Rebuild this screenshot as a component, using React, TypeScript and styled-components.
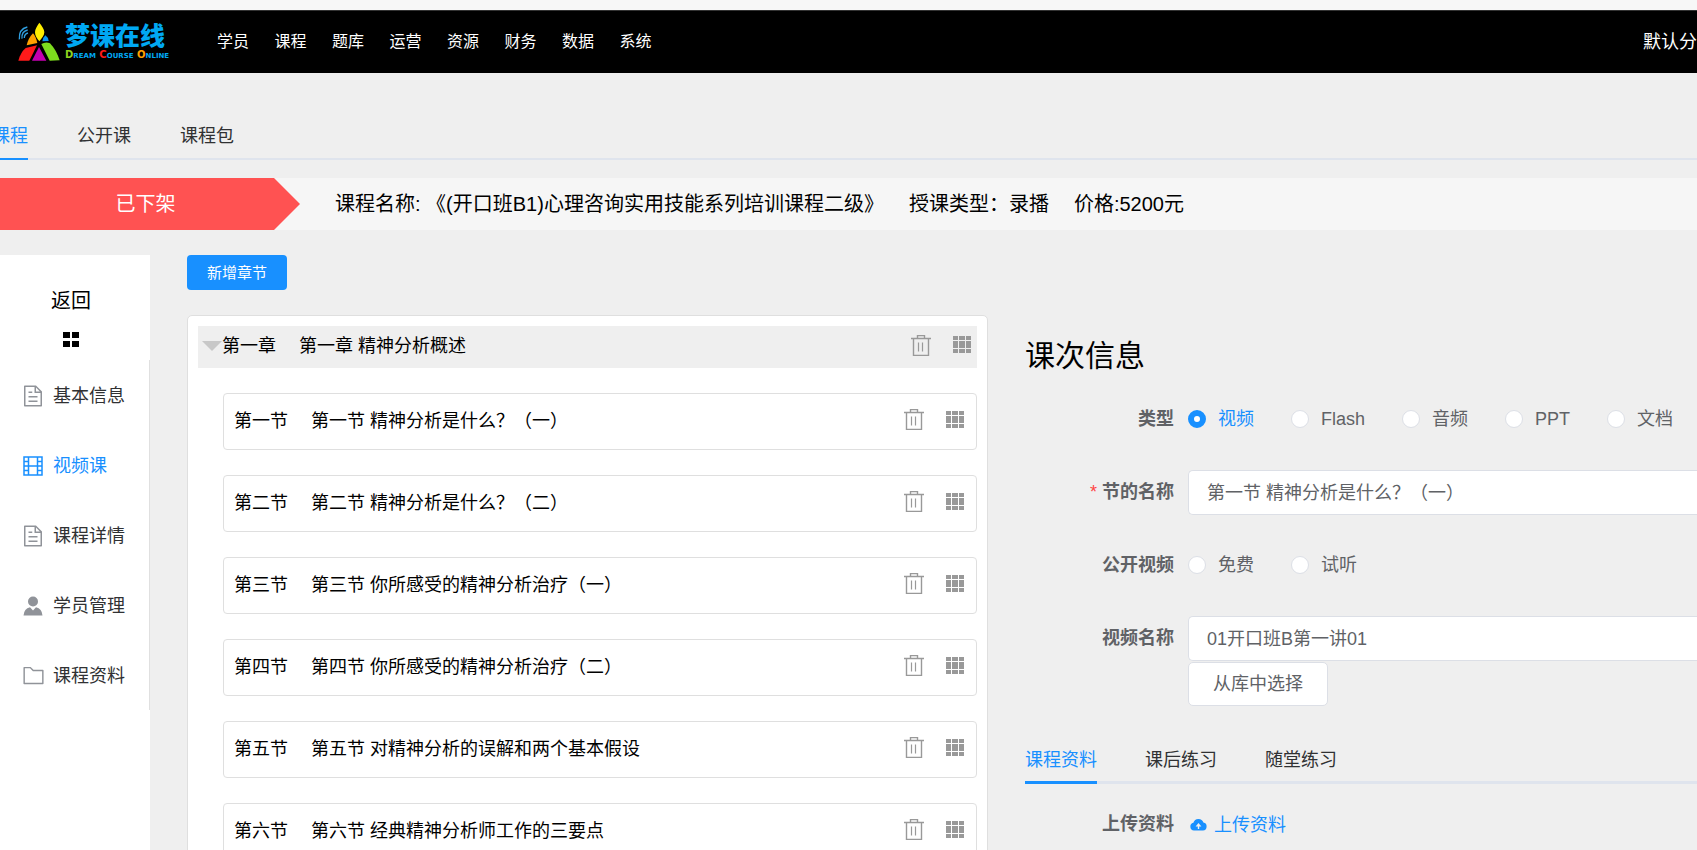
import React, { useState } from "react";
import styled, { createGlobalStyle } from "styled-components";

const BLUE = "#1890ff";
const FONT = '"Liberation Sans", "Noto Sans CJK SC", sans-serif';

const GlobalStyle = createGlobalStyle`
  *, *::before, *::after { box-sizing: border-box; }
  body {
    margin: 0;
    background: #efefef;
    color: #000;
    font-family: ${FONT};
    font-size: 18px;
    line-height: 24px;
  }
  button, input { font: inherit; color: inherit; }
  a { color: inherit; text-decoration: none; }
  svg { display: block; flex: none; }
`;

const Page = styled.div`
  display: flex;
  flex-direction: column;
  height: 100vh;
  overflow: hidden;
`;

const TopStrip = styled.div`
  flex: none;
  height: 10px;
  background: #f7f7f7;
`;

const Header = styled.header`
  flex: none;
  display: flex;
  align-items: center;
  height: 63px;
  padding-left: 17px;
  background: #000;
  border-top: 1px solid #333;
  color: #fff;
`;

const Brand = styled.a`
  display: flex;
  align-items: center;
  gap: 4px;
  width: 192px;
`;

const BrandName = styled.span`
  display: block;
  color: #00a8f3;
  font-size: 25px;
  line-height: 25px;
  font-weight: 900;
`;

const BrandSub = styled.span`
  display: block;
  color: #00a8f3;
  font-family: "DejaVu Sans", sans-serif;
  font-size: 10px;
  line-height: 11px;
  font-weight: 700;
  font-variant: small-caps;
  white-space: nowrap;
`;

const Initial = styled.span<{ $color: string }>`
  color: ${(p) => p.$color};
`;

const MainNav = styled.nav`
  display: grid;
  grid-template-columns: repeat(8, 1fr);
  width: 460px;
  margin-left: 8px;
  font-size: 16px;
`;

const Branch = styled.span`
  margin-left: auto;
  white-space: nowrap;
`;

const Tabs = styled.nav`
  flex: none;
  display: flex;
  gap: 49px;
  height: 50px;
  margin: 37px 0 0;
  border-bottom: 2px solid #dfe4ed;
  color: #303133;
`;

const CourseTabs = styled(Tabs)`
  & > :first-child { margin-left: -8px; }
`;

const Tab = styled.a<{ $active?: boolean; $bar?: number }>`
  flex: none;
  height: 50px;
  padding-top: 14px;
  white-space: nowrap;
  color: ${(p) => (p.$active ? BLUE : "inherit")};
  border-bottom: ${(p) => p.$bar ?? 2}px solid ${(p) => (p.$active ? BLUE : "transparent")};
`;

const StatusBar = styled.section`
  flex: none;
  display: flex;
  align-items: center;
  gap: 25px;
  height: 52px;
  margin-top: 18px;
  background: #f6f6f6;
  font-size: 20px;
  white-space: nowrap;
`;

const StatusFlag = styled.strong`
  display: flex;
  align-items: center;
  justify-content: center;
  width: 300px;
  height: 100%;
  margin-right: 10px;
  padding-right: 9px;
  background: #ff5252;
  clip-path: polygon(0 0, 274px 0, 100% 50%, 274px 100%, 0 100%);
  color: #fff;
  font-weight: inherit;
`;

const Body = styled.div`
  flex: 1;
  min-height: 0;
  display: flex;
  margin-top: 25px;
`;

const Sidebar = styled.aside`
  flex: none;
  width: 150px;
  background: #fff;
`;

const BackLink = styled.a`
  display: flex;
  flex-direction: column;
  align-items: center;
  gap: 16px;
  height: 105px;
  padding: 31px 8px 0 0;
  font-size: 20px;
  line-height: 30px;
`;

const Menu = styled.ul`
  margin: 0;
  padding: 0;
  list-style: none;
  border-right: 1px solid #e0e0e0;
`;

const MenuLink = styled.a<{ $active?: boolean }>`
  display: grid;
  grid-template-columns: 24px auto;
  justify-content: start;
  justify-items: center;
  align-items: center;
  gap: 8px;
  height: 70px;
  padding: 1px 0 0 21px;
  color: ${(p) => (p.$active ? BLUE : "#303133")};
  white-space: nowrap;
  svg { color: ${(p) => (p.$active ? BLUE : "#909399")}; }
`;

const Workspace = styled.main`
  flex: 1;
  min-width: 0;
  display: grid;
  grid-template-columns: minmax(0, 801px) minmax(300px, 1fr);
  column-gap: 37px;
  margin-left: 37px;
`;

const PrimaryButton = styled.button`
  width: 100px;
  height: 35px;
  padding: 0;
  border: 0;
  border-radius: 4px;
  background: ${BLUE};
  color: #fff;
  font-size: 15px;
  cursor: pointer;
`;

const ChapterCard = styled.section`
  margin-top: 25px;
  padding: 10px;
  background: #fff;
  border: 1px solid #dfdfdf;
  border-radius: 5px;
`;

const ChapterHead = styled.header`
  display: flex;
  align-items: center;
  height: 42px;
  padding: 0 6px 2px 4px;
  background: #efefef;
`;

const Caret = styled.svg`
  color: #c8c8c8;
`;

const SectionList = styled.ol`
  display: flex;
  flex-direction: column;
  gap: 25px;
  margin: 25px 0 0 25px;
  padding: 0;
  list-style: none;
`;

const SectionRow = styled.li`
  display: flex;
  align-items: center;
  height: 57px;
  padding: 0 12px 2px 10px;
  border: 1px solid #dfdfdf;
  border-radius: 4px;
`;

const Ordinal = styled.span`
  flex: none;
  width: 77px;
`;

const Title = styled.span`
  flex: 1;
  min-width: 0;
  overflow: hidden;
  white-space: nowrap;
`;

const Actions = styled.span`
  display: flex;
  align-items: center;
  gap: 22px;
  padding-bottom: 2px;
  color: #999;
`;

const IconButton = styled.button`
  padding: 0;
  border: 0;
  background: none;
  color: inherit;
  cursor: pointer;
`;

const Detail = styled.section`
  padding-top: 82px;
`;

const DetailTitle = styled.h1`
  margin: 0 0 22px;
  font-size: 30px;
  line-height: 38px;
  font-weight: inherit;
`;

const Field = styled.div`
  display: grid;
  grid-template-columns: 149px minmax(0, 1fr);
  column-gap: 14px;
  margin-bottom: 28px;
  color: #606266;
`;

const FieldLabel = styled.label<{ $required?: boolean }>`
  line-height: 45px;
  text-align: right;
  font-weight: 700;
  &::before {
    content: ${(p) => (p.$required ? '"*"' : "none")};
    margin-right: 5px;
    color: #ff4444;
    font-weight: 400;
  }
`;

const TextInput = styled.input`
  display: block;
  width: 100%;
  height: 45px;
  padding: 0 0 3px 18px;
  background: #fff;
  border: 1px solid #dcdfe6;
  border-right: 0;
  border-radius: 5px 0 0 5px;
  outline: none;
`;

const PlainButton = styled.button`
  width: 140px;
  height: 44px;
  margin-top: 1px;
  padding: 0;
  background: #fff;
  border: 1px solid #dcdfe6;
  border-radius: 5px;
  cursor: pointer;
`;

const RadioGroup = styled.div`
  display: flex;
  gap: 37px;
  height: 44px;
`;

const RadioLabel = styled.label<{ $checked: boolean }>`
  display: flex;
  align-items: center;
  gap: 12px;
  white-space: nowrap;
  color: ${(p) => (p.$checked ? BLUE : "inherit")};
`;

const Radio = styled.input`
  appearance: none;
  flex: none;
  width: 18px;
  height: 18px;
  margin: 0;
  background: #fff;
  border: 1px solid #dcdfe6;
  border-radius: 50%;
  &:checked { border: 6px solid ${BLUE}; }
`;

const MaterialTabs = styled(Tabs)`
  gap: 48px;
  margin: 1px 0 18px;
  border-bottom-width: 3px;
`;

const UploadLink = styled.a`
  display: flex;
  align-items: center;
  gap: 7px;
  height: 45px;
  padding-left: 2px;
  color: ${BLUE};
`;

const LogoMark = () => (
  <svg width="44" height="40" viewBox="50 34 132 120" aria-hidden="true">
    <path d="M117 36C125 46 132 56 132 65C132 75 123 84 117 92C110 84 104 75 104 65C104 56 110 46 117 36Z" fill="#ffee00" />
    <path d="M98 68Q107 78 111 97L79 104Q84 82 98 68Z" fill="#ffa200" />
    <path d="M54 150Q60 126 76 112L110 104L87 150Z" fill="#ff1a1a" />
    <path d="M116 109L138 150H95Z" fill="#c400b0" />
    <path d="M123 100Q136 92 149 98Q168 118 178 149L148 150Z" fill="#7ddc1e" />
    <path d="M135 74Q144 80 145 91L126 92Q128 80 135 74Z" fill="#0b93ee" />
    <g fill="none" stroke="#2f9fe0" strokeWidth="4">
      <path d="M57 86Q55 55 81 49" />
      <path d="M65 84Q63 62 82 58" />
      <path d="M72 82Q72 70 83 67" />
    </g>
  </svg>
);

const FourSquares = () => (
  <svg width="16" height="15" viewBox="0 0 16 15" fill="currentColor" aria-hidden="true">
    <path d="M0 0h7v6H0zM9 0h7v6H9zM0 9h7v6H0zM9 9h7v6H9z" />
  </svg>
);

const DocumentIcon = () => (
  <svg width="24" height="24" viewBox="0 0 1024 1024" fill="currentColor" aria-hidden="true">
    <path d="M832 384H576V128H192v768h640zm-26.500-64L640 154.500V320zM160 64h480l256 256v608a32 32 0 0 1-32 32H160a32 32 0 0 1-32-32V96a32 32 0 0 1 32-32m160 448h384v64H320zm0-192h160v64H320zm0 384h384v64H320z" />
  </svg>
);

const FilmIcon = () => (
  <svg width="20" height="20" viewBox="0 0 20 20" fill="none" stroke="currentColor" strokeWidth="1.500" aria-hidden="true">
    <path d="M1 1h18v18H1zM5.500 1v18M14.500 1v18M5.500 10h9M1 5.500h4.500M1 10h4.500M1 14.500h4.500M14.500 5.500H19M14.500 10H19M14.500 14.500H19" />
  </svg>
);

const UserIcon = () => (
  <svg width="20" height="20" viewBox="0 0 20 20" fill="currentColor" aria-hidden="true">
    <circle cx="10" cy="5.500" r="5" />
    <path d="M.5 19.500Q1 12.500 7 11.200L10 14.500L13 11.200Q19 12.500 19.500 19.500Z" />
  </svg>
);

const FolderIcon = () => (
  <svg width="23" height="23" viewBox="0 0 1024 1024" fill="currentColor" aria-hidden="true">
    <path d="M128 192v640h768V320H485.760L357.500 192zm-32-64h287.870l128.380 128H928a32 32 0 0 1 32 32v576a32 32 0 0 1-32 32H96a32 32 0 0 1-32-32V160a32 32 0 0 1 32-32" />
  </svg>
);

const TrashIcon = () => (
  <svg width="20" height="21" viewBox="0 0 20 21" fill="none" stroke="currentColor" aria-hidden="true">
    <path d="M0 3.500h20M6.500 3.500v-3h7v3M2.500 3.500v17h15v-17" strokeWidth="1.400" />
    <path d="M7.500 7.500v9M11.500 7.500v9" strokeWidth="1.200" />
  </svg>
);

const GridIcon = () => (
  <svg width="18" height="18" viewBox="0 0 18 18" fill="currentColor" aria-hidden="true">
    <path d="M0 0h5v4H0zM6 0h6v4H6zM13 0h5v4h-5zM0 5h5v7H0zM6 5h6v7H6zM13 5h5v7h-5zM0 13h5v4H0zM6 13h6v4H6zM13 13h5v4h-5z" />
  </svg>
);

const CloudUploadIcon = () => (
  <svg width="17" height="13" viewBox="0 0 17 13" fill="currentColor" aria-hidden="true">
    <path
      fillRule="evenodd"
      d="M4 12.500A3.900 3.900 0 0 1 3.400 4.800A5.200 5.200 0 0 1 13.400 4.600A4 4 0 0 1 13 12.500ZM8.500 5L5.600 8.400H7.800V11H9.200V8.400H11.400Z"
    />
  </svg>
);

const NAV = ["学员", "课程", "题库", "运营", "资源", "财务", "数据", "系统"];

const MENU = [
  { label: "基本信息", icon: <DocumentIcon /> },
  { label: "视频课", icon: <FilmIcon />, active: true },
  { label: "课程详情", icon: <DocumentIcon /> },
  { label: "学员管理", icon: <UserIcon /> },
  { label: "课程资料", icon: <FolderIcon /> },
];

const SECTIONS = [
  ["第一节", "第一节 精神分析是什么？（一）"],
  ["第二节", "第二节 精神分析是什么？（二）"],
  ["第三节", "第三节 你所感受的精神分析治疗（一）"],
  ["第四节", "第四节 你所感受的精神分析治疗（二）"],
  ["第五节", "第五节 对精神分析的误解和两个基本假设"],
  ["第六节", "第六节 经典精神分析师工作的三要点"],
];

const RowActions = () => (
  <Actions>
    <IconButton type="button" aria-label="删除"><TrashIcon /></IconButton>
    <IconButton type="button" aria-label="排序"><GridIcon /></IconButton>
  </Actions>
);

function Choices({ name, options, initial }: { name: string; options: string[]; initial?: string }) {
  const [value, setValue] = useState(initial);
  return (
    <RadioGroup role="radiogroup" aria-labelledby={`${name}-label`}>
      {options.map((option) => (
        <RadioLabel key={option} $checked={value === option}>
          <Radio type="radio" name={name} checked={value === option} onChange={() => setValue(option)} />
          {option}
        </RadioLabel>
      ))}
    </RadioGroup>
  );
}

export default function App() {
  return (
    <Page>
      <GlobalStyle />
      <TopStrip />
      <Header>
        <Brand href="#">
          <LogoMark />
          <span>
            <BrandName>梦课在线</BrandName>
            <BrandSub>
              <Initial $color="#8fd41f">D</Initial>ream <Initial $color="#ff1a1a">C</Initial>ourse{" "}
              <Initial $color="#ffa200">O</Initial>nline
            </BrandSub>
          </span>
        </Brand>
        <MainNav>
          {NAV.map((item) => (
            <a href="#" key={item}>{item}</a>
          ))}
        </MainNav>
        <Branch>默认分</Branch>
      </Header>

      <CourseTabs>
        <Tab href="#" $active>课程</Tab>
        <Tab href="#">公开课</Tab>
        <Tab href="#">课程包</Tab>
      </CourseTabs>

      <StatusBar>
        <StatusFlag>已下架</StatusFlag>
        <span>课程名称: 《(开口班B1)心理咨询实用技能系列培训课程二级》</span>
        <span>授课类型：录播</span>
        <span>价格:5200元</span>
      </StatusBar>

      <Body>
        <Sidebar>
          <BackLink href="#">
            返回
            <FourSquares />
          </BackLink>
          <Menu>
            {MENU.map((item) => (
              <li key={item.label}>
                <MenuLink href="#" $active={item.active}>
                  {item.icon}
                  {item.label}
                </MenuLink>
              </li>
            ))}
          </Menu>
        </Sidebar>

        <Workspace>
          <div>
            <PrimaryButton type="button">新增章节</PrimaryButton>
            <ChapterCard>
              <ChapterHead>
                <Caret width="20" height="10" viewBox="0 0 20 10" aria-hidden="true">
                  <path d="M0 0h20L10 10z" fill="currentColor" />
                </Caret>
                <Ordinal>第一章</Ordinal>
                <Title>第一章 精神分析概述</Title>
                <RowActions />
              </ChapterHead>
              <SectionList>
                {SECTIONS.map(([ordinal, title]) => (
                  <SectionRow key={ordinal}>
                    <Ordinal>{ordinal}</Ordinal>
                    <Title>{title}</Title>
                    <RowActions />
                  </SectionRow>
                ))}
              </SectionList>
            </ChapterCard>
          </div>

          <Detail>
            <DetailTitle>课次信息</DetailTitle>
            <Field>
              <FieldLabel as="span" id="kind-label">类型</FieldLabel>
              <Choices name="kind" options={["视频", "Flash", "音频", "PPT", "文档"]} initial="视频" />
            </Field>
            <Field>
              <FieldLabel htmlFor="section-name" $required>节的名称</FieldLabel>
              <TextInput id="section-name" defaultValue="第一节 精神分析是什么？（一）" />
            </Field>
            <Field>
              <FieldLabel as="span" id="open-label">公开视频</FieldLabel>
              <Choices name="open" options={["免费", "试听"]} />
            </Field>
            <Field>
              <FieldLabel htmlFor="video-name">视频名称</FieldLabel>
              <div>
                <TextInput id="video-name" defaultValue="01开口班B第一讲01" />
                <PlainButton type="button">从库中选择</PlainButton>
              </div>
            </Field>
            <MaterialTabs>
              <Tab href="#" $active $bar={3}>课程资料</Tab>
              <Tab href="#" $bar={3}>课后练习</Tab>
              <Tab href="#" $bar={3}>随堂练习</Tab>
            </MaterialTabs>
            <Field>
              <FieldLabel as="span">上传资料</FieldLabel>
              <UploadLink href="#">
                <CloudUploadIcon />
                上传资料
              </UploadLink>
            </Field>
          </Detail>
        </Workspace>
      </Body>
    </Page>
  );
}
